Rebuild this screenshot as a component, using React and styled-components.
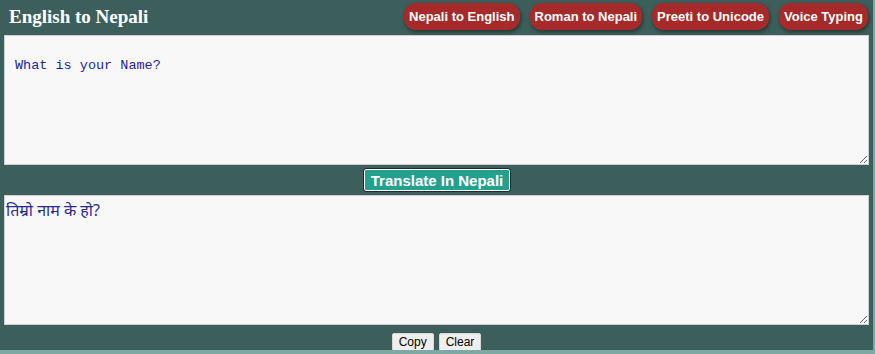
import styled, { createGlobalStyle } from "styled-components";

const GlobalStyle = createGlobalStyle`
  html, body {
    margin: 0;
    padding: 0;
    background-color: #3d5f5b;
  }
  * {
    box-sizing: border-box;
  }
`;

const Page = styled.div`
  width: 875px;
  height: 354px;
  background-color: #3d5f5b;
  border-right: 2px solid #7fa8a4;
  display: flex;
  flex-direction: column;
  overflow: hidden;
`;

const Header = styled.header`
  height: 35px;
  display: flex;
  align-items: center;
  justify-content: space-between;
  padding: 0 5px 0 9px;
`;

const Title = styled.h1`
  margin: 0;
  color: #fff;
  font-family: "Liberation Serif", "DejaVu Serif", serif;
  font-weight: 700;
  font-size: 19px;
`;

const Nav = styled.nav`
  display: flex;
  gap: 10px;
  padding-bottom: 2px;
`;

const NavButton = styled.a`
  display: inline-flex;
  align-items: center;
  height: 27px;
  padding: 0 5px;
  border-radius: 12px;
  background-color: #a62a2a;
  color: #fff;
  font-family: "Liberation Sans", Arial, sans-serif;
  font-weight: 700;
  font-size: 13px;
  box-shadow: 1px 2px 4px rgba(0, 0, 0, 0.45);
  cursor: pointer;
`;

const TextBox = styled.textarea`
  display: block;
  margin: 0 6px 0 4px;
  width: 865px;
  height: 130px;
  resize: vertical;
  border: 1px solid #cfcfcf;
  background-color: #f8f8f8;
  color: ${(p) => (p.$output ? "#2b2b8f" : "#1f1fa0")};
  font-family: ${(p) =>
    p.$output
      ? '"Noto Sans", "DejaVu Sans", sans-serif'
      : '"Liberation Mono", "DejaVu Sans Mono", monospace'};
  font-size: ${(p) => (p.$output ? "16px" : "13.5px")};
  padding: ${(p) => (p.$output ? "3px 1px" : "22px 10px")};
  outline: none;
`;

const ActionRow = styled.div`
  display: flex;
  justify-content: center;
  align-items: center;
  gap: 5px;
  height: ${(p) => p.$h}px;
  padding-top: ${(p) => p.$pt || 0}px;
`;

const TranslateButton = styled.button`
  height: 24px;
  padding: 0 7px;
  background-color: #24a08e;
  color: #fff;
  font-family: "Liberation Sans", Arial, sans-serif;
  font-weight: 700;
  font-size: 15px;
  border: 1px solid #1d2b2a;
  box-shadow: inset 0 0 0 1px #ffffff;
  border-radius: 3px;
  margin-left: 1px;
`;

const SmallButton = styled.button`
  height: 18px;
  padding: 0 6px;
  background-color: #efefef;
  color: #000;
  font-family: "Liberation Sans", Arial, sans-serif;
  font-size: 12px;
  border: 1px solid #d8d8d8;
  border-radius: 2px;
`;

const Footer = styled.div`
  height: 4px;
  margin-top: auto;
  background-color: #7fa8a4;
`;

export default function App() {
  return (
    <>
      <GlobalStyle />
      <Page>
        <Header>
          <Title>English to Nepali</Title>
          <Nav>
            <NavButton>Nepali to English</NavButton>
            <NavButton>Roman to Nepali</NavButton>
            <NavButton>Preeti to Unicode</NavButton>
            <NavButton>Voice Typing</NavButton>
          </Nav>
        </Header>
        <TextBox defaultValue="What is your Name?" />
        <ActionRow $h={31}>
          <TranslateButton>Translate In Nepali</TranslateButton>
        </ActionRow>
        <TextBox $output defaultValue="तिम्रो नाम के हो?" />
        <ActionRow $h={25} $pt={9}>
          <SmallButton>Copy</SmallButton>
          <SmallButton>Clear</SmallButton>
        </ActionRow>
        <Footer />
      </Page>
    </>
  );
}
